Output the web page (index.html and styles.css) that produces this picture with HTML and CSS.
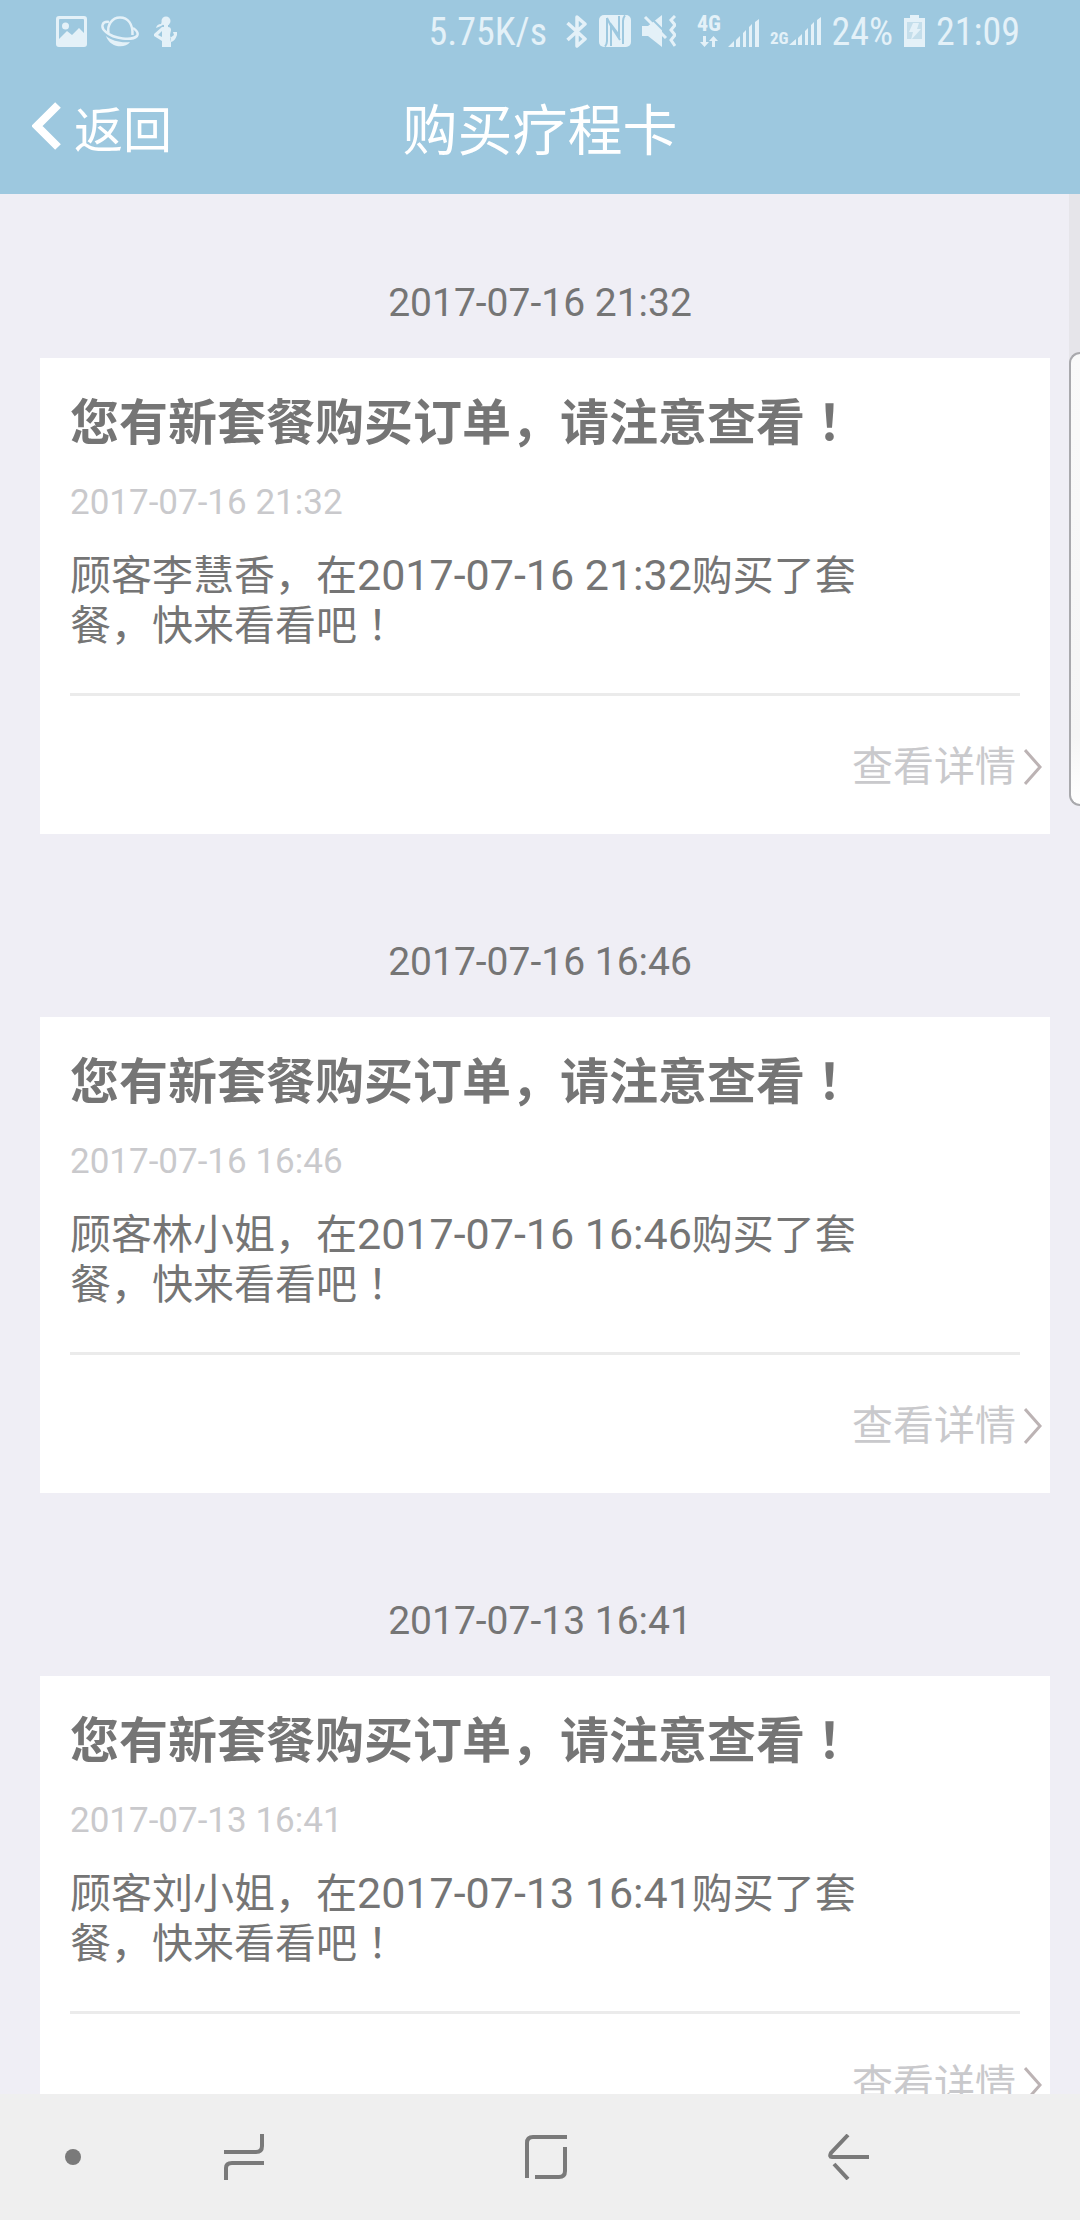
FILE: index.html
```html
<!DOCTYPE html>
<html lang="zh-CN">
<head>
<meta charset="utf-8">
<meta name="viewport" content="width=device-width">
<title>购买疗程卡</title>
<link rel="stylesheet" href="styles.css">
</head>
<body>
<header class="top">
  <div class="status">
    <div class="status-group status-left">
      <svg width="31" height="31" viewBox="0 0 31 31"><path fill-rule="evenodd" d="M3 0h25q3 0 3 3v25q0 3-3 3H3q-3 0-3-3V3q0-3 3-3zM3 4v19l8-8 5 4 7-7 5 5V4q0-1-1-1H4Q3 3 3 4z"/><circle cx="9.500" cy="10" r="3.500"/></svg>
      <svg width="38" height="31" viewBox="0 0 38 31"><g fill="none" stroke="currentColor"><path stroke-width="2.500" d="M7.500 17C6 9 11 1.500 19 1.500S32 8 31.500 19"/><path stroke-width="2.500" d="M8 6C1 5-1 11 5 16c8 7 26 9 31 4 2-3-1-6-4-8"/></g><path d="M5 20c6 5 15 7 24 6-5 7-20 6-24-6z"/></svg>
      <svg width="26" height="31" viewBox="0 0 26 31"><circle cx="13" cy="5" r="4.500"/><path d="M10 3 8 8q-4 0-5 4l5-2 3-2zM11 8h4v3q3 0 3 3l-1 5 1 5v7H9v-6L1 20v-2l8-7h2zM9 15l-4 4 4 2zM17 22l4-3-1-3h4v3q-2 6-6 7z" fill-rule="evenodd"/></svg>
    </div>
    <div class="status-group">
      <span class="stat">5.75K/s</span>
      <svg class="bluetooth" width="22" height="33" viewBox="0 0 22 33"><path fill="none" stroke="currentColor" stroke-width="3.500" stroke-linejoin="round" d="M1.500 8 19 24l-8 7V2l8 7L1.500 25"/></svg>
      <svg width="32" height="32" viewBox="0 0 32 32"><rect width="32" height="32" rx="5"/><path class="cut" d="M8 3V26Q8 29 6 31.500M24 29V6Q24 3 26 .500M8 3 12 11V31M12 11 21 25M20 1V20L11 8"/></svg>
      <svg width="34" height="32" viewBox="0 0 34 32"><path d="M0 11h6l14-11v32L6 21H0z"/><path class="cut" stroke-width="3" d="M6 0l22 22"/><path fill="none" stroke="currentColor" stroke-width="3" d="M3 2l21 21M33 1l-4 4 4 5-4 5 4 5-4 5 4 6"/></svg>
      <span class="sim sim-first">
        <span class="network"><b>4G</b><svg width="18" height="11" viewBox="0 0 18 11"><path d="M3 0h3v6h3L4.500 11 0 6h3zM12 11h3V5h3L13.500 0 9 5h3z"/></svg></span>
        <svg width="31" height="28" viewBox="0 0 31 28"><path d="M0 28 6 22v6zM8 21l4-4v11H8zM15 14l3-3v17h-3zM21 8l3-3v23h-3zM27 3l4-3v28h-4z"/></svg>
      </span>
      <span class="sim"><b>2G</b><svg width="32" height="28" viewBox="0 0 32 28"><path d="M0 28 7 22v6zM9 21l4-4v11H9zM16 14l3-3v17h-3zM22 8l3-3v23h-3zM28 3l4-3v28h-4z"/></svg></span>
      <span class="stat">24%</span>
      <svg width="21" height="32" viewBox="0 0 21 32"><path d="M6 0h9v3h6v29H0V3h6z"/><path fill="#c4deeb" d="M3 7h15v17H3z"/><path d="M9 8h6l-2 6h4L7 25l2-8H5z"/></svg>
      <span class="stat">21:09</span>
    </div>
  </div>
  <div class="bar">
    <a class="back" href="#"><svg width="30" height="48" viewBox="0 0 30 48"><path fill="none" stroke="currentColor" stroke-width="8" d="M26 3 5 24l21 21"/></svg>返回</a>
    <h1 class="title">购买疗程卡</h1>
  </div>
</header>
<main class="feed">
  <section class="entry">
    <time class="stamp">2017-07-16 21:32</time>
    <article class="card">
      <div class="card-body">
        <h2 class="card-title">您有新套餐购买订单，请注意查看<span class="mark" lang="ja">！</span></h2>
        <time class="card-date">2017-07-16 21:32</time>
        <p class="card-text">顾客李慧香，在<time>2017-07-16 21:32</time>购买了套餐，快来看看吧<span class="mark" lang="ja">！</span></p>
      </div>
      <a class="more" href="#">查看详情<svg width="18" height="36" viewBox="0 0 18 36"><path d="M1 1l15 17L1 35"/></svg></a>
    </article>
  </section>
  <section class="entry">
    <time class="stamp">2017-07-16 16:46</time>
    <article class="card">
      <div class="card-body">
        <h2 class="card-title">您有新套餐购买订单，请注意查看<span class="mark" lang="ja">！</span></h2>
        <time class="card-date">2017-07-16 16:46</time>
        <p class="card-text">顾客林小姐，在<time>2017-07-16 16:46</time>购买了套餐，快来看看吧<span class="mark" lang="ja">！</span></p>
      </div>
      <a class="more" href="#">查看详情<svg width="18" height="36" viewBox="0 0 18 36"><path d="M1 1l15 17L1 35"/></svg></a>
    </article>
  </section>
  <section class="entry">
    <time class="stamp">2017-07-13 16:41</time>
    <article class="card">
      <div class="card-body">
        <h2 class="card-title">您有新套餐购买订单，请注意查看<span class="mark" lang="ja">！</span></h2>
        <time class="card-date">2017-07-13 16:41</time>
        <p class="card-text">顾客刘小姐，在<time>2017-07-13 16:41</time>购买了套餐，快来看看吧<span class="mark" lang="ja">！</span></p>
      </div>
      <a class="more" href="#">查看详情<svg width="18" height="36" viewBox="0 0 18 36"><path d="M1 1l15 17L1 35"/></svg></a>
    </article>
  </section>
  <div class="edge-track"></div>
  <div class="edge-handle"></div>
</main>
<nav class="nav">
  <button class="key" aria-label="固定"><svg width="16" height="16" viewBox="0 0 16 16"><circle class="dot" cx="8" cy="8" r="8"/></svg></button>
  <div class="keys">
    <button class="key" aria-label="最近任务"><svg width="40" height="48" viewBox="0 0 40 48"><path d="M38 1v12q0 6-6 6H0M2 47V35q0-5 6-5h32"/></svg></button>
    <button class="key" aria-label="主屏幕"><svg width="42" height="44" viewBox="0 0 42 44"><path d="M2 43V8q0-6 6-6h34M40 12v24q0 6-6 6H10"/></svg></button>
    <button class="key" aria-label="返回"><svg width="41" height="46" viewBox="0 0 41 46"><path d="M20 1 3 19q-2 4 1 4h37M6 30l14 15"/></svg></button>
  </div>
</nav>
</body>
</html>
```
FILE: styles.css
```css
* {
  box-sizing: border-box;
}

body {
  margin: 0;
  height: 100vh;
  display: flex;
  flex-direction: column;
  background: #efeef5;
  color: #757575;
  font-family: Roboto, "Noto Sans CJK SC", sans-serif;
}

svg {
  display: block;
  flex: none;
}

a {
  color: inherit;
  text-decoration: none;
}

/* Header */
.top {
  background: #9dc8df;
  color: #fff;
}

.status {
  display: flex;
  justify-content: space-between;
  height: 62px;
  padding: 0 60px 0 56px;
  color: #e4f1f8;
}

.status svg {
  fill: currentColor;
}

.status .cut {
  fill: none;
  stroke: #9dc8df;
  stroke-width: 2px;
}

.status-group {
  display: flex;
  align-items: center;
  gap: 11px;
}

.status-left {
  gap: 14px;
}

.stat {
  padding-top: 2px;
  font-family: "Roboto Condensed", Roboto, sans-serif;
  font-size: 38px;
}

.bluetooth {
  margin-left: 8px;
}

.sim {
  display: flex;
  align-items: flex-end;
  font-family: "Roboto Condensed", Roboto, sans-serif;
  font-size: 17px;
  line-height: 14px;
}

.sim-first {
  gap: 7px;
  margin-left: 10px;
}

.network {
  display: grid;
  justify-items: center;
  gap: 4px;
  font-size: 22px;
  line-height: 16px;
}

.bar {
  display: grid;
  grid-template-columns: 1fr auto 1fr;
  align-items: center;
  height: 132px;
  padding: 0 32px 4px;
}

.back {
  display: flex;
  align-items: center;
  gap: 12px;
  font-size: 49px;
}

.title {
  margin: 0;
  font-size: 55px;
  font-weight: 400;
}

/* Message list */
.feed {
  position: relative;
  flex: 1;
  min-height: 0;
  overflow: hidden;
  display: flex;
  flex-direction: column;
  gap: 105px;
  padding: 86px 30px 0 40px;
}

.entry {
  flex: none;
  display: grid;
  gap: 32px;
}

.stamp {
  margin-right: 10px;
  text-align: center;
  font-size: 39px;
  line-height: 46px;
}

.card {
  padding: 36px 0 42px;
  background: #fff;
}

.card-body {
  margin: 0 30px;
  padding-bottom: 42px;
  border-bottom: 3px solid #ebebeb;
}

.card-title {
  margin: 0 0 29px;
  font-size: 49px;
  line-height: 60px;
}

.card-date {
  display: block;
  font-size: 35px;
  line-height: 40px;
  color: #c9c9cc;
}

.card-text {
  max-width: 800px;
  margin: 28px 0 0;
  font-size: 41px;
  line-height: 50px;
}

.card-text time {
  font-size: 43px;
  line-height: 1px;
}

.mark {
  font-family: "Noto Sans CJK JP", sans-serif;
  line-height: 1px;
}

.more {
  display: flex;
  justify-content: flex-end;
  align-items: center;
  gap: 8px;
  margin-top: 46px;
  padding-right: 8px;
  font-size: 41px;
  line-height: 50px;
  color: #c9c9cc;
}

.more path {
  fill: none;
  stroke: #bcb3b4;
  stroke-width: 3px;
}

/* Edge panel */
.edge-track,
.edge-handle {
  position: absolute;
  right: 0;
  width: 11px;
}

.edge-track {
  top: 0;
  height: 172px;
  background: #e6e5ea;
}

.edge-handle {
  top: 158px;
  height: 454px;
  border: 2px solid #a9a9ad;
  border-right: 0;
  border-radius: 14px 0 0 14px;
  background: linear-gradient(#fafafa, #f5f5f5 85%, #fff);
}

/* Navigation keys */
.nav {
  display: flex;
  align-items: center;
  gap: 143px;
  height: 126px;
  padding: 0 211px 0 65px;
  background: #efefef;
}

.keys {
  flex: 1;
  display: flex;
  align-items: center;
  justify-content: space-between;
}

.key {
  padding: 0;
  border: 0;
  background: none;
}

.key path {
  fill: none;
  stroke: #7a7a7a;
  stroke-width: 4px;
}

.dot {
  fill: #7a7a7a;
}
```
